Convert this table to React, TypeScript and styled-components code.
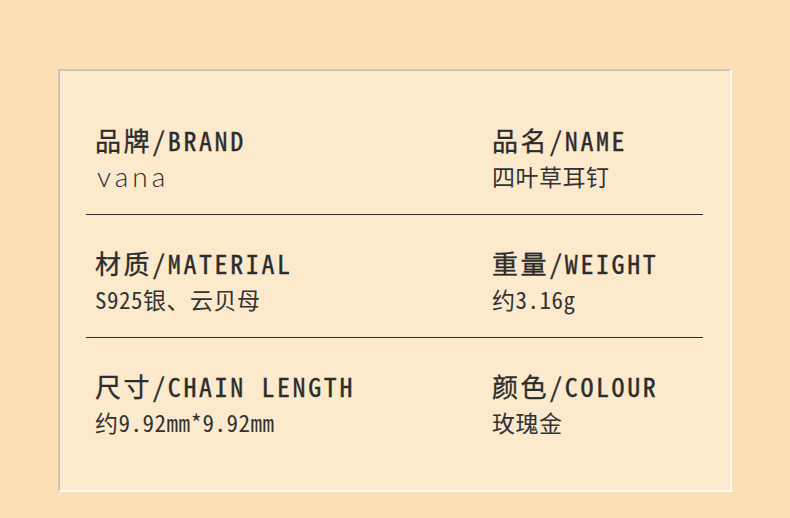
import React from 'react'
import styled, { createGlobalStyle } from 'styled-components'

const GlobalStyle = createGlobalStyle`
  html, body {
    margin: 0;
    padding: 0;
    background: #fde0b5;
  }
`

const rows = [
  [
    { title: '品牌/BRAND', value: 'vana', brand: true },
    { title: '品名/NAME', value: '四叶草耳钉' },
  ],
  [
    { title: '材质/MATERIAL', value: 'S925银、云贝母' },
    { title: '重量/WEIGHT', value: '约3.16g' },
  ],
  [
    { title: '尺寸/CHAIN LENGTH', value: '约9.92mm*9.92mm' },
    { title: '颜色/COLOUR', value: '玫瑰金' },
  ],
]

const App = () => {
  return (
    <Page>
      <GlobalStyle />
      <Card>
        {rows.map((row, i) => (
          <Row key={i} last={i === rows.length - 1}>
            {row.map((item) => (
              <Cell key={item.title}>
                <Title>{item.title}</Title>
                {item.brand ? <Brand>{item.value}</Brand> : <Value>{item.value}</Value>}
              </Cell>
            ))}
          </Row>
        ))}
      </Card>
    </Page>
  )
}

const Page = styled.div`
  width: 790px;
  height: 518px;
  box-sizing: border-box;
  padding: 69px 0 0 58px;
  background: #fde0b5;
`

const Card = styled.div`
  width: 674px;
  height: 423px;
  box-sizing: border-box;
  background: #fdeacc;
  border: 2px solid;
  border-color: #cac6b7 #fffbf3 #fffbf3 #cac6b7;
  padding: 21px 27px 0 26px;
`

const Row = styled.div<{ last?: boolean }>`
  display: grid;
  grid-template-columns: 397px 1fr;
  padding: 32px 0 25px 9px;
  height: 123px;
  box-sizing: border-box;
  border-bottom: ${(p) => (p.last ? 'none' : '1px solid #2e2e2e')};
`

const Cell = styled.div`
  display: flex;
  flex-direction: column;
  gap: 5px;
`

const Title = styled.div`
  font-family: 'Noto Sans Mono CJK SC', 'Noto Sans CJK SC', monospace;
  font-size: 26px;
  line-height: 32px;
  font-weight: 400;
  -webkit-text-stroke: 0.35px #2c2c2c;
  letter-spacing: 2.6px;
  color: #2c2c2c;
  white-space: pre;
`

const Value = styled.div`
  font-family: 'Noto Sans Mono CJK SC', 'Noto Sans CJK SC', monospace;
  font-size: 23px;
  line-height: 30px;
  font-weight: 400;
  letter-spacing: 0.5px;
  color: #333;
  white-space: pre;
`

const Brand = styled.div`
  font-family: 'Lato', 'DejaVu Sans', sans-serif;
  font-size: 28px;
  line-height: 30px;
  font-weight: 300;
  letter-spacing: 4px;
  color: #2c2c2c;
  padding-left: 2px;
`

export default App
